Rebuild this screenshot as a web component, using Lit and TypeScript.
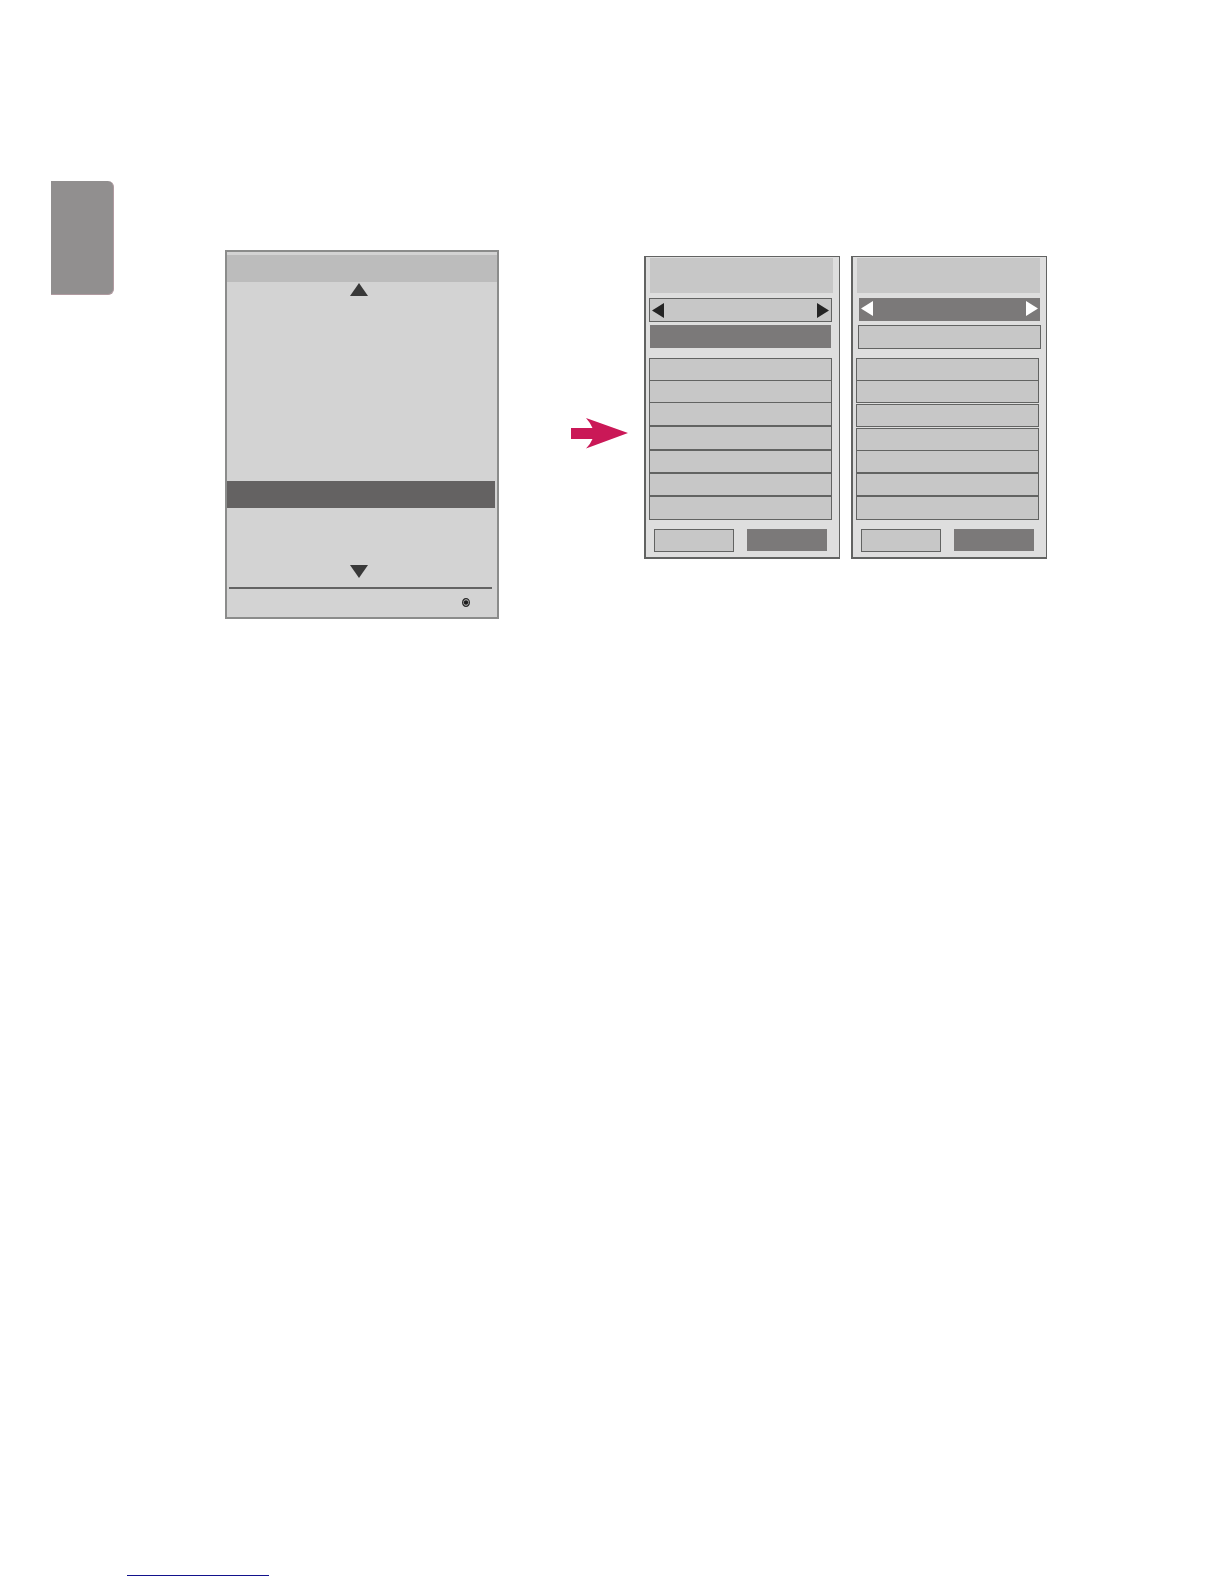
import { LitElement, html, css, svg } from "lit";
import { customElement, property } from "lit/decorators.js";
import { classMap } from "lit/directives/class-map.js";

const leftTriangle = html`<svg width="12" height="15" viewBox="0 0 12 15" aria-hidden="true">
  ${svg`<path d="M0 7.5 12 0V15Z" fill="currentColor" />`}
</svg>`;
const rightTriangle = html`<svg width="12" height="15" viewBox="0 0 12 15" aria-hidden="true">
  ${svg`<path d="M12 7.5 0 0V15Z" fill="currentColor" />`}
</svg>`;

/* Scrolling option menu with one highlighted entry. */
@customElement("option-menu")
export class OptionMenu extends LitElement {
  @property({ type: Number }) count = 10;
  @property({ type: Number }) selected = 7;

  static styles = css`
    :host {
      display: block;
    }
    .menu {
      box-sizing: border-box;
      border: 2px solid #8b8c8b;
      background: #d3d3d3;
      padding-top: 3px;
    }
    .title {
      height: 27px;
      background: #bcbcbc;
    }
    .scroll {
      display: block;
      margin: 0 auto;
      padding: 0 6px 0 0;
      border: 0;
      background: none;
      color: #383838;
    }
    .scroll svg {
      display: block;
    }
    .up {
      padding-top: 1px;
    }
    ul {
      list-style: none;
      margin: 0;
      padding: 3px 2px 5px 0;
    }
    .item {
      display: block;
      width: 100%;
      height: 26px;
      padding: 0;
      border: 0;
      background: none;
    }
    .item.on {
      height: 27px;
      background: #646262;
    }
    .foot {
      display: flex;
      justify-content: flex-end;
      align-items: center;
      height: 26px;
      margin: 9px 5px 0 2px;
      padding: 0 22px 2px 0;
      border-top: 2px solid #636363;
    }
  `;

  render() {
    return html`
      <div class="menu">
        <div class="title"></div>
        <button class="scroll up" aria-label="Previous entries">
          <svg width="18" height="13" viewBox="0 0 18 13"><path d="M9 0 18 13H0Z" fill="currentColor" /></svg>
        </button>
        <ul>
          ${Array.from(
            { length: this.count },
            (_, i) => html`<li>
              <button
                class=${classMap({ item: true, on: i === this.selected })}
                aria-label=${`Option ${i + 1}`}
              ></button>
            </li>`
          )}
        </ul>
        <button class="scroll" aria-label="Next entries">
          <svg width="18" height="13" viewBox="0 0 18 13"><path d="M0 0H18L9 13Z" fill="currentColor" /></svg>
        </button>
        <div class="foot">
          <svg width="8" height="9" viewBox="0 0 8 9" aria-hidden="true">
            <ellipse cx="4" cy="4.5" rx="3.4" ry="3.9" fill="#bdbdbd" stroke="#2a2a2a" stroke-width="1.2" />
            <circle cx="4" cy="4.5" r="2.2" fill="#1c1c1c" />
          </svg>
        </div>
      </div>
    `;
  }
}

/* Settings dialog: title, selector, action, value rows and two buttons. */
@customElement("setting-panel")
export class SettingPanel extends LitElement {
  @property() active: "selector" | "action" = "action";

  static styles = css`
    :host {
      display: block;
    }
    .panel {
      box-sizing: border-box;
      border: 1px solid #626362;
      border-left-width: 2px;
      border-bottom-width: 2px;
      background: #dedede;
      padding: 1px 0 5px;
    }
    .title {
      height: 35px;
      margin: 0 6px 5px 4px;
      background: #c7c7c7;
    }
    .selector {
      box-sizing: border-box;
      display: flex;
      justify-content: space-between;
      align-items: center;
      height: 24px;
      margin: 0 7px 3px 3px;
      padding: 0 2px;
      border: 1px solid #626362;
      background: #c7c7c7;
      color: #242424;
    }
    .selector.on {
      height: 23px;
      margin: 0 6px 4px 6px;
      padding-bottom: 2px;
      border: 0;
      background: #7b7979;
      color: #fff;
    }
    .arrow {
      display: block;
      padding: 0;
      border: 0;
      background: none;
      color: inherit;
    }
    .arrow svg {
      display: block;
    }
    .bar {
      display: grid;
      height: 33px;
      margin: 0 5px;
    }
    .bar.on {
      margin: 0 8px 0 4px;
    }
    .box {
      box-sizing: border-box;
      height: 24px;
      padding: 0;
      border: 1px solid #626362;
      border-radius: 0;
      background: #c7c7c7;
    }
    .box.on {
      height: 23px;
      border: 0;
      background: #7b7979;
    }
    ul {
      list-style: none;
      margin: 0 7px 9px 3px;
      padding: 0;
    }
    li {
      box-sizing: border-box;
      height: 23px;
      border: 1px solid #626362;
      background: #c7c7c7;
    }
    .tall {
      height: 24px;
    }
    .joined {
      margin-top: -1px;
    }
    .apart {
      margin-top: 1px;
    }
    .actions {
      display: grid;
      grid-template-columns: 1fr 1fr;
      gap: 13px;
      margin: 0 12px 0 8px;
    }
    .actions .box {
      height: 23px;
    }
    .actions .box.on {
      height: 22px;
    }
  `;

  render() {
    const onSelector = this.active === "selector";
    const rows = onSelector
      ? ["", "joined", "apart", "apart", "joined", "", "tall"]
      : ["", "joined", "joined tall", "tall", "", "", "tall"];
    return html`
      <div class="panel">
        <div class="title"></div>
        <div class=${classMap({ selector: true, on: onSelector })}>
          <button class="arrow" aria-label="Previous value">${leftTriangle}</button>
          <button class="arrow" aria-label="Next value">${rightTriangle}</button>
        </div>
        <div class=${classMap({ bar: true, on: !onSelector })}>
          <button class=${classMap({ box: true, on: !onSelector })} aria-label="Apply"></button>
        </div>
        <ul>
          ${rows.map((kind) => html`<li class=${kind}></li>`)}
        </ul>
        <div class="actions">
          <button class="box" aria-label="Back"></button>
          <button class="box on" aria-label="Close"></button>
        </div>
      </div>
    `;
  }
}

@customElement("app-root")
export class AppRoot extends LitElement {
  static styles = css`
    :host {
      display: block;
      background: #fff;
      font-family: "Liberation Sans", Arial, sans-serif;
    }
    .page {
      box-sizing: border-box;
      display: flex;
      flex-direction: column;
      justify-content: space-between;
      min-height: 100vh;
      padding: 181px 0 8px;
    }
    .figure {
      display: grid;
      grid-template-columns:
        51fr [tab] 63fr 111fr [menu] 274fr 72fr [arrow] 57fr 16fr
        [first] 196fr 11fr [second] 196fr 177fr;
      align-items: start;
    }
    .tab {
      grid-column: tab;
      box-sizing: border-box;
      height: 114px;
      border: solid #b09aa0;
      border-width: 0 1px 1px 0;
      border-radius: 0 6px 6px 0;
      background: #918f8f;
    }
    .menu {
      grid-column: menu;
      margin-top: 69px;
    }
    .arrow {
      grid-column: arrow;
      margin-top: 237px;
      width: 100%;
    }
    .first {
      grid-column: first;
      margin-top: 75px;
    }
    .second {
      grid-column: second;
      margin-top: 75px;
    }
    .foot {
      display: grid;
      grid-template-columns: 127fr 142fr 955fr;
    }
    .link {
      grid-column: 2;
      height: 16px;
      border-bottom: 1px solid #12128c;
    }
  `;

  render() {
    return html`
      <div class="page">
        <main class="figure">
          <div class="tab"></div>
          <option-menu class="menu"></option-menu>
          <svg class="arrow" viewBox="0 0 57 31" aria-hidden="true">
            <path d="M0 10H21.5Q19.5 5 15 0L57 15 15 30.5Q19.5 26 21.5 21H0Z" fill="#ca1857" />
          </svg>
          <setting-panel class="first" active="action"></setting-panel>
          <setting-panel class="second" active="selector"></setting-panel>
        </main>
        <footer class="foot">
          <a class="link" href="#" aria-label="Website"></a>
        </footer>
      </div>
    `;
  }
}
